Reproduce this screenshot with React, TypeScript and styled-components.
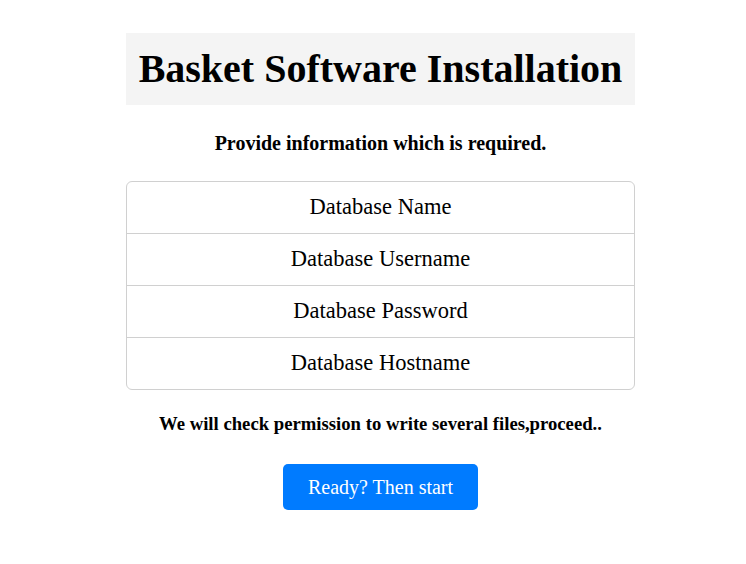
import styled, { createGlobalStyle } from 'styled-components';

const GlobalStyle = createGlobalStyle`
    body {
        margin: 0;
        background: #ffffff;
        font-family: "Liberation Serif", "Times New Roman", serif;
        color: #000;
    }
`;

const Page = styled.div`
    display: flex;
    justify-content: center;
    padding: 33px 0 0 15px;
`;

const Container = styled.div`
    width: 509px;
    display: flex;
    flex-direction: column;
    align-items: center;
`;

const TitleBox = styled.div`
    box-sizing: border-box;
    width: 100%;
    height: 72px;
    background: #f4f4f4;
    display: flex;
    align-items: center;
    justify-content: center;
`;

const Title = styled.h1`
    margin: 0;
    font-size: 40px;
    font-weight: bold;
    line-height: 1;
`;

const Note = styled.p<{ $size: number; $top: number }>`
    margin: ${(p) => p.$top}px 0 0;
    font-size: ${(p) => p.$size}px;
    font-weight: bold;
    line-height: 1.2;
    text-align: center;
`;

const List = styled.ul`
    box-sizing: border-box;
    width: 100%;
    margin: 26px 0 0;
    padding: 0;
    list-style: none;
    border: 1px solid #d0d0d0;
    border-radius: 6px;
`;

const Item = styled.li`
    height: 51px;
    padding-bottom: 1px;
    box-sizing: border-box;
    display: flex;
    align-items: center;
    justify-content: center;
    font-size: 22.5px;

    &:not(:first-child) {
        border-top: 1px solid #d0d0d0;
        height: 52px;
    }
`;

const StartButton = styled.button`
    margin-top: 29px;
    width: 195px;
    height: 46px;
    border: 0;
    border-radius: 5px;
    background: #007bff;
    color: #ffffff;
    font-family: "Liberation Serif", "Times New Roman", serif;
    font-size: 20px;
    cursor: pointer;
`;

const fields = [
    'Database Name',
    'Database Username',
    'Database Password',
    'Database Hostname',
];

export default function App() {
    return (
        <>
            <GlobalStyle />
            <Page>
                <Container>
                    <TitleBox>
                        <Title>Basket Software Installation</Title>
                    </TitleBox>
                    <Note $size={20} $top={26}>
                        Provide information which is required.
                    </Note>
                    <List>
                        {fields.map((f) => (
                            <Item key={f}>{f}</Item>
                        ))}
                    </List>
                    <Note $size={18.7} $top={22.8}>
                        We will check permission to write several files,proceed..
                    </Note>
                    <StartButton>Ready? Then start</StartButton>
                </Container>
            </Page>
        </>
    );
}
